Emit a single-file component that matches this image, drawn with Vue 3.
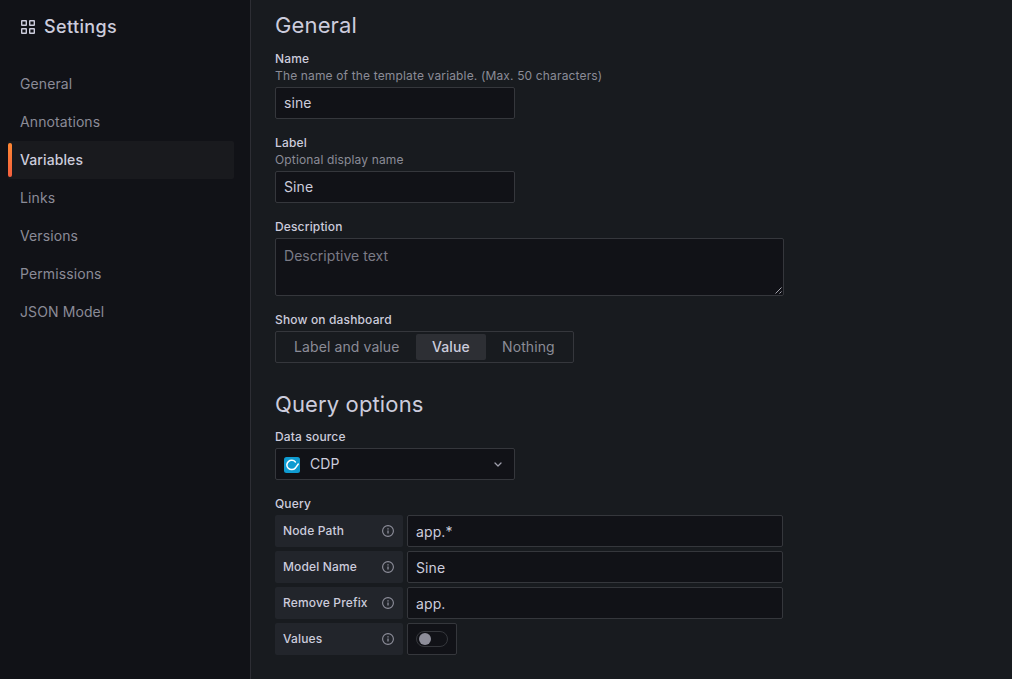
<script setup>
const nav = ['General', 'Annotations', 'Variables', 'Links', 'Versions', 'Permissions', 'JSON Model']
const active = 'Variables'
const options = ['Label and value', 'Value', 'Nothing']
const selected = 'Value'
const rows = [
  { label: 'Node Path', value: 'app.*' },
  { label: 'Model Name', value: 'Sine' },
  { label: 'Remove Prefix', value: 'app.' },
  { label: 'Values', toggle: true }
]
</script>

<template>
  <div class="page">
    <aside class="sidebar">
      <div class="title">
        <svg class="apps" width="14" height="14" viewBox="0 0 14 14" fill="none" stroke="currentColor" stroke-width="1.4">
          <rect x="0.7" y="0.7" width="4.6" height="4.6" rx="0.3" />
          <rect x="8.7" y="0.7" width="4.6" height="4.6" rx="0.3" />
          <rect x="0.7" y="8.7" width="4.6" height="4.6" rx="0.3" />
          <rect x="8.7" y="8.7" width="4.6" height="4.6" rx="0.3" />
        </svg>
        <span>Settings</span>
      </div>
      <nav>
        <a v-for="item in nav" :key="item" class="nav-item" :class="{ active: item === active }">{{ item }}</a>
      </nav>
    </aside>

    <main class="content">
      <h3>General</h3>
      <section class="field">
        <label>Name</label>
        <p class="hint">The name of the template variable. (Max. 50 characters)</p>
        <div class="input short">sine</div>
      </section>
      <section class="field">
        <label>Label</label>
        <p class="hint">Optional display name</p>
        <div class="input short">Sine</div>
      </section>
      <section class="field">
        <label class="solo">Description</label>
        <div class="textarea">
          Descriptive text
          <svg class="grip" width="7" height="7" viewBox="0 0 7 7" stroke="#b8b8c0" stroke-width="0.9">
            <path d="M0.5 6.5L6.5 0.5M4.5 6.5L6.5 4.5" />
          </svg>
        </div>
      </section>
      <section class="field">
        <label class="solo">Show on dashboard</label>
        <div class="radio">
          <span v-for="o in options" :key="o" class="option" :class="{ on: o === selected }">{{ o }}</span>
        </div>
      </section>

      <h3 class="second">Query options</h3>
      <section class="field">
        <label class="solo">Data source</label>
        <div class="input short select">
          <svg class="logo" width="16" height="16" viewBox="0 0 16 16">
            <rect width="16" height="16" rx="2.5" fill="#0f9bd1" />
            <path d="M11.4 4.9A4.9 4.6 0 1 0 11.3 11.1L14.3 7" fill="none" stroke="#fff" stroke-width="1.5" stroke-linecap="round" stroke-linejoin="round" />
          </svg>
          <span class="ds">CDP</span>
          <svg class="chevron" width="8" height="5" viewBox="0 0 8 5" fill="none" stroke="#9e9eab" stroke-width="1.3" stroke-linecap="round" stroke-linejoin="round">
            <path d="M1 1L4 4L7 1" />
          </svg>
        </div>
      </section>
      <section class="query">
        <label class="solo">Query</label>
        <div class="rows">
          <div v-for="r in rows" :key="r.label" class="row">
            <div class="row-label">
              <span>{{ r.label }}</span>
              <svg width="12" height="12" viewBox="0 0 12 12" fill="none" stroke="#8e8f9b">
                <circle cx="6" cy="6" r="5.4" stroke-width="1.1" />
                <path d="M6 5.5V8.6M6 3.2V4.4" stroke-width="1.3" />
              </svg>
            </div>
            <div v-if="r.toggle" class="input switch-box"><span class="switch"><i></i></span></div>
            <div v-else class="input wide">{{ r.value }}</div>
          </div>
        </div>
      </section>
    </main>
  </div>
</template>

<style>
body { background: #181b1f; }
</style>

<style scoped>
* { box-sizing: border-box; }
.page {
  display: flex;
  height: 679px;
  overflow: hidden;
  background: #181b1f;
  color: #ccccdc;
  font: 400 14px/22px Inter, "Liberation Sans", sans-serif;
  letter-spacing: 0.1px;
}
.sidebar {
  width: 251px;
  flex: none;
  padding: 15px 16px 0 8px;
  background: #111217;
  border-right: 1px solid #2d2e34;
}
.title {
  display: flex;
  align-items: center;
  height: 24px;
  padding-left: 13px;
  gap: 9px;
  margin-bottom: 26px;
  font-size: 18px;
  font-weight: 500;
  letter-spacing: 0.36px;
}
.nav-item {
  display: flex;
  align-items: center;
  position: relative;
  height: 38px;
  padding-left: 12px;
  border-radius: 2px;
  color: #8b8b97;
}
.nav-item.active { background: #191a1e; color: #ccccdc; font-weight: 500; }
.nav-item.active::before {
  content: "";
  position: absolute;
  left: 0;
  top: 2px;
  bottom: 2px;
  width: 4px;
  border-radius: 2px;
  background: linear-gradient(#ff8833, #f55f3e);
}
.content { flex: 1; padding: 13px 0 0 24px; }
h3 { margin: 0 0 13px; height: 24px; font-size: 22px; font-weight: 400; line-height: 24px; letter-spacing: 0.13px; }
h3.second { margin: 29px 0 12px; }
.field { margin-bottom: 15px; }
label { display: block; height: 18px; font-size: 12px; font-weight: 500; line-height: 18px; letter-spacing: 0.15px; }
label.solo { height: 20px; }
.hint { margin: 0; height: 19px; font-size: 12px; line-height: 16px; letter-spacing: 0.15px; color: #8b8c97; }
.input, .textarea {
  background: #111217;
  border: 1px solid #35373c;
  border-radius: 2px;
  padding: 0 8px;
}
.input { display: flex; align-items: center; height: 32px; }
.short { width: 240px; }
.wide { width: 376px; padding-top: 2px; }
.textarea { position: relative; width: 509px; height: 58px; padding-top: 6px; color: #7b7b86; letter-spacing: 0.04px; }
.grip { position: absolute; right: 1px; bottom: 1px; }
.radio { display: flex; width: 299px; height: 32px; padding: 2px; border: 1px solid #35373c; border-radius: 2px; }
.option { height: 26px; line-height: 26px; padding: 0 16px; border-radius: 2px; color: #8b8c97; }
.option:first-child { width: 138px; }
.option.on { width: 70px; background: #2d2f34; color: #ccccdc; font-weight: 500; }
.logo { position: relative; top: 1px; }
.ds { margin-left: 10px; }
.chevron { margin-left: auto; margin-right: 4px; }
.rows { display: flex; flex-direction: column; gap: 4px; }
.row { display: flex; gap: 4px; }
.row-label {
  display: flex;
  align-items: center;
  justify-content: space-between;
  width: 128px;
  height: 32px;
  padding: 0 9px 0 8px;
  background: #22252b;
  border-radius: 2px;
  font-size: 12px;
  font-weight: 500;
  letter-spacing: 0.15px;
}
.switch-box { width: 50px; }
.switch { display: flex; align-items: center; width: 32px; height: 16px; padding-left: 2px; border: 1px solid #35373c; border-radius: 8px; }
.switch i { width: 12px; height: 12px; border-radius: 50%; background: #8d8d99; }
</style>
